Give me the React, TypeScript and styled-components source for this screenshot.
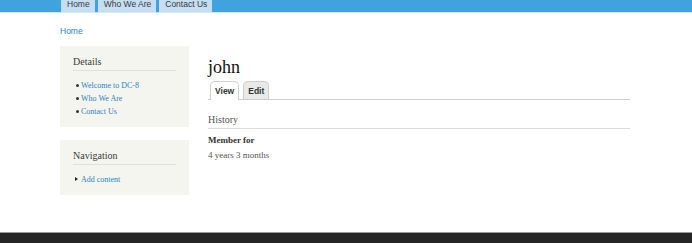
import React, { FC } from "react";
import styled, { createGlobalStyle } from "styled-components";

const COLORS = {
  blue: "#41a3de",
  tab: "#c6def2",
  link: "#2a83c4",
  block: "#f5f5f0",
  text: "#3b3b3b",
  muted: "#555555",
  rule: "#dcdcdc",
  footer: "#262626",
};

const GlobalStyle = createGlobalStyle`
  html, body {
    margin: 0;
    padding: 0;
    background: #fff;
    height: 243px;
    overflow: hidden;
  }
  #root {
    height: 243px;
    display: flex;
    flex-direction: column;
  }
`;

const SERIF = `"Liberation Serif", "DejaVu Serif", serif`;
const SANS = `"Liberation Sans", Arial, sans-serif`;

const menu = ["Home", "Who We Are", "Contact Us"];
const details = ["Welcome to DC-8", "Who We Are", "Contact Us"];

const SideBlock: FC<{ title: string; items: string[]; arrow?: boolean }> = ({
  title,
  items,
  arrow,
}) => (
  <Block>
    <BlockTitle>{title}</BlockTitle>
    <BlockList>
      {items.map((item) => (
        <BlockItem key={item} $arrow={arrow}>
          <Link>{item}</Link>
        </BlockItem>
      ))}
    </BlockList>
  </Block>
);

export default function App() {
  return (
    <>
      <GlobalStyle />
      <Header>
        <MainMenu>
          {menu.map((m) => (
            <MenuTab key={m}>{m}</MenuTab>
          ))}
        </MainMenu>
      </Header>

      <Page>
        <Breadcrumb>Home</Breadcrumb>
        <Columns>
          <Sidebar>
            <SideBlock title="Details" items={details} />
            <SideBlock title="Navigation" items={["Add content"]} arrow />
          </Sidebar>

          <Main>
            <PageTitle>john</PageTitle>
            <Tabs>
              <Tab $active>View</Tab>
              <Tab>Edit</Tab>
            </Tabs>
            <SectionTitle>History</SectionTitle>
            <Label>Member for</Label>
            <Value>4 years 3 months</Value>
          </Main>
        </Columns>
      </Page>

      <Footer />
    </>
  );
}

const Header = styled.header`
  height: 12px;
  background: ${COLORS.blue};
  border-bottom: 1px solid #d4e9f6;
  overflow: hidden;
  flex-shrink: 0;
`;

const MainMenu = styled.nav`
  display: flex;
  gap: 3px;
  padding-left: 61px;
  height: 12px;
`;

const MenuTab = styled.span`
  background: ${COLORS.tab};
  color: #3a3a3a;
  font-family: ${SANS};
  font-size: 8.5px;
  line-height: 8px;
  height: 12px;
  padding: 0 5px 0 6px;
  box-sizing: border-box;
`;

const Page = styled.div`
  width: 570px;
  margin-left: 60px;
  flex: 1;
`;

const Breadcrumb = styled.a`
  display: block;
  margin-top: 13px;
  font-family: ${SANS};
  font-size: 8.5px;
  line-height: 10px;
  color: ${COLORS.link};
`;

const Columns = styled.div`
  display: flex;
  gap: 19px;
  margin-top: 10px;
`;

const Sidebar = styled.aside`
  width: 129px;
  display: flex;
  flex-direction: column;
  gap: 13px;
`;

const Block = styled.section`
  background: ${COLORS.block};
  padding: 10px 13px 9px;
`;

const BlockTitle = styled.h2`
  margin: 0;
  font-family: ${SERIF};
  font-weight: normal;
  font-size: 10px;
  line-height: 11px;
  color: ${COLORS.text};
  padding-bottom: 3px;
  border-bottom: 1px solid #e1e1dc;
`;

const BlockList = styled.ul`
  list-style: none;
  margin: 8px 0 0;
  padding: 0;
`;

const BlockItem = styled.li<{ $arrow?: boolean }>`
  position: relative;
  padding-left: 8px;
  font-family: ${SERIF};
  font-size: 8px;
  line-height: 13px;

  &::before {
    content: "";
    position: absolute;
    left: ${({ $arrow }) => ($arrow ? "2px" : "3px")};
    top: ${({ $arrow }) => ($arrow ? "4px" : "5px")};
    ${({ $arrow }) =>
      $arrow
        ? `border-left: 3px solid #222; border-top: 2.5px solid transparent; border-bottom: 2.5px solid transparent;`
        : `width: 3px; height: 3px; border-radius: 50%; background: #333;`}
  }
`;

const Link = styled.a`
  color: ${COLORS.link};
`;

const Main = styled.main`
  flex: 1;
  padding-top: 11px;
`;

const PageTitle = styled.h1`
  margin: 0;
  font-family: ${SERIF};
  font-weight: normal;
  font-size: 18px;
  line-height: 20px;
  color: #111;
`;

const Tabs = styled.div`
  display: flex;
  gap: 4px;
  margin-top: 4px;
  padding-left: 2px;
  border-bottom: 1px solid #cfcfcf;
`;

const Tab = styled.span<{ $active?: boolean }>`
  font-family: ${SANS};
  font-weight: bold;
  font-size: 8.5px;
  line-height: 16px;
  padding: 1px 4px 0;
  color: #333;
  background: ${({ $active }) => ($active ? "#fff" : "#e9e9e9")};
  border: 1px solid #cfcfcf;
  border-bottom: none;
  border-radius: 5px 5px 0 0;
  margin-bottom: ${({ $active }) => ($active ? "-1px" : "0")};
  ${({ $active }) => $active && "padding-bottom: 1px;"}
`;

const SectionTitle = styled.h3`
  margin: 14px 0 0;
  font-family: ${SERIF};
  font-weight: normal;
  font-size: 10px;
  line-height: 12px;
  color: ${COLORS.muted};
  padding-bottom: 2px;
  border-bottom: 1px solid ${COLORS.rule};
`;

const Label = styled.div`
  margin-top: 6px;
  font-family: ${SERIF};
  font-weight: bold;
  font-size: 9px;
  line-height: 11px;
  color: #333;
`;

const Value = styled.div`
  margin-top: 4px;
  font-family: ${SERIF};
  font-size: 9px;
  line-height: 11px;
  color: ${COLORS.muted};
`;

const Footer = styled.footer`
  height: 10px;
  background: ${COLORS.footer};
  border-top: 1px solid #9a9a9a;
  flex-shrink: 0;
`;
